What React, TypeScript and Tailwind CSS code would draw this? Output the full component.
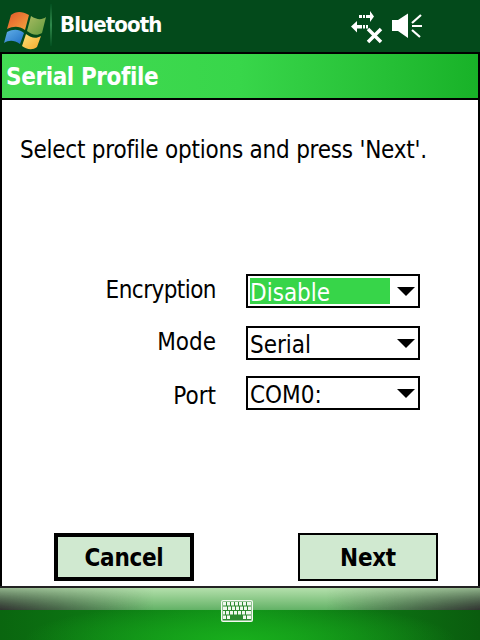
const fields = [
  { label: "Encryption", value: "Disable", selected: true, rowClass: "h-[34px]", labelClass: "-mt-[1px] tracking-[-0.55px]" },
  { label: "Mode", value: "Serial", selected: false, rowClass: "h-[34px] mt-[18px]", labelClass: "-mt-[1px]" },
  { label: "Port", value: "COM0:", selected: false, rowClass: "h-[34px] mt-[16px]", labelClass: "mt-[3px]" },
];

const WindowsLogo = () => (
  <svg width="44" height="46" viewBox="0 0 44 46" className="ml-[4px] mt-[6px] shrink-0">
    <defs>
      <linearGradient id="red" x1="0" y1="0" x2="1" y2="1">
        <stop offset="0" stopColor="#e0562a" />
        <stop offset="1" stopColor="#f5a63f" />
      </linearGradient>
      <linearGradient id="grn" x1="0" y1="0" x2="1" y2="1">
        <stop offset="0" stopColor="#a9bb62" />
        <stop offset="1" stopColor="#5f9a3c" />
      </linearGradient>
      <linearGradient id="blu" x1="0" y1="0" x2="1" y2="1">
        <stop offset="0" stopColor="#62b0e8" />
        <stop offset="1" stopColor="#1f6fc4" />
      </linearGradient>
      <linearGradient id="yel" x1="0" y1="0" x2="1" y2="1">
        <stop offset="0" stopColor="#fbe27a" />
        <stop offset="1" stopColor="#f4a92a" />
      </linearGradient>
    </defs>
    <path d="M7 9 C12 5 18 5 25 9 L21 24 C15 20 10 20 3 23 Z" fill="url(#red)" />
    <path d="M27 10 C33 14 38 14 42 11 L38 27 C33 30 28 29 23 25 Z" fill="url(#grn)" />
    <path d="M3 26 C9 23 15 23 20 27 L16 38 C10 34 5 34 0 37 Z" fill="url(#blu)" />
    <path d="M22 28 C27 32 32 33 37 30 L33 41 C28 45 22 43 18 40 Z" fill="url(#yel)" />
  </svg>
);

const TrayIcons = () => (
  <svg width="74" height="34" viewBox="0 0 74 34" fill="white">
    <path d="M9 5h3v3H9zM13 5h2v3h-2zM16 5h4V1l4 5.500-4 5.500V8h-4z" />
    <path d="M1 16.500l6-5.500v4h5v3.500H7v4zM13 15h2v3.500h-2zM16 15h2v3.500h-2z" />
    <path d="M18 19l6.500 6.500M31 19l-6.500 6.500M18 32l6.500-6.500M31 32l-6.500-6.500" stroke="white" strokeWidth="3.500" fill="none" />
    <path d="M42 10h6l10-6.500v24.500l-10-7h-6z" />
    <path d="M62 13l9-8M62 16h10M62 20l8 7" stroke="white" strokeWidth="2.200" fill="none" />
  </svg>
);

// keys as [x, width] per row
const keyRows = [
  [[2, 3], [6, 3], [10, 3], [14, 3], [18, 3], [22, 3], [26, 4]],
  [[2, 4], [7, 3], [11, 3], [15, 3], [19, 3], [23, 3], [27, 3]],
  [[2, 2], [5, 3], [9, 3], [13, 3], [17, 3], [21, 3], [25, 5]],
  [[2, 3], [6, 3], [22, 3], [26, 4]],
];

const KeyboardIcon = () => (
  <svg width="32" height="22" viewBox="0 0 32 22">
    <rect width="32" height="22" rx="2" fill="#f4faf2" />
    <rect x="1.500" y="1.500" width="29" height="19" fill="#2c8a30" />
    {keyRows.map((row, y) =>
      row.map(([x, w]) => <rect key={`${y}-${x}`} x={x} y={2 + y * 4.500} width={w} height="3.500" fill="#f0f8ee" />)
    )}
  </svg>
);

export default function App() {
  return (
    <div className="w-[480px] h-[640px] flex flex-col bg-black overflow-hidden font-['DejaVu_Sans',sans-serif] [font-stretch:condensed]">
      <div className="h-[52px] shrink-0 flex bg-[#034a1b]">
        <WindowsLogo />
        <div className="w-[2px] h-[42px] mt-[4px] ml-[2px] bg-gradient-to-b from-[#035020] via-[#2f8a4c] to-[#035020]" />
        <div className="ml-[8px] mt-[10px] text-[22px] leading-[30px] font-bold text-white tracking-[-0.9px]">Bluetooth</div>
        <div className="ml-auto mr-[56px] mt-[10px]">
          <TrayIcons />
        </div>
      </div>

      <div className="h-[2px] shrink-0 bg-black" />

      <div className="flex-1 flex flex-col mx-[2px] min-h-0">
        <div className="h-[44px] shrink-0 flex items-center px-[4px] pt-[2px] bg-gradient-to-r from-[#43db54] via-[#38d64a] to-[#18b228] text-[24px] font-bold text-white tracking-[-0.4px]">
          Serial Profile
        </div>
        <div className="h-[2px] shrink-0 bg-black" />

        <div className="flex-1 flex flex-col bg-white text-black">
          <div className="ml-[18px] mt-[33px] text-[24px] leading-[34px] whitespace-nowrap tracking-[-0.23px]">
            Select profile options and press 'Next'.
          </div>

          <div className="mt-[107px] ml-[244px] flex flex-col w-[174px]">
            {fields.map((f) => (
              <div key={f.label} className={`relative flex ${f.rowClass}`}>
                <div className={`absolute right-[204px] top-0 whitespace-nowrap text-[24px] leading-[34px] ${f.labelClass}`}>
                  {f.label}
                </div>
                <div className="w-full flex items-stretch border-2 border-black p-[2px]">
                  <div className={`w-[140px] flex items-center text-[24px] pt-[3px] ${f.selected ? "bg-[#37d549] text-white" : "text-black"}`}>
                    {f.value}
                  </div>
                  <div className="ml-auto mr-[1px] self-center mt-[1px] w-0 h-0 border-x-[9px] border-x-transparent border-t-[9px] border-t-black" />
                </div>
              </div>
            ))}
          </div>

          <div className="mt-auto mb-[5px] flex justify-between pl-[52px] pr-[40px]">
            <button className="w-[140px] h-[48px] border-4 border-black bg-[#d0e9d0] text-[24px] font-bold tracking-[-0.3px] pt-[1px]">Cancel</button>
            <button className="w-[140px] h-[48px] border-2 border-black bg-[#d0e9d0] text-[24px] font-bold tracking-[-0.3px] pt-[1px]">Next</button>
          </div>
        </div>
      </div>

      <div className="h-[2px] shrink-0 bg-[#222]" />

      <div className="relative h-[52px] shrink-0 flex flex-col">
        <div className="relative h-[22px] bg-gradient-to-b from-[#b4e0ac] to-[#62b266]">
          <div className="absolute inset-0 bg-[linear-gradient(to_right,#333,transparent_32%,transparent_68%,#333)] [mask-image:linear-gradient(to_bottom,rgba(0,0,0,0.25),black)]" />
        </div>
        <div className="flex-1 bg-[radial-gradient(ellipse_45%_130%_at_50%_100%,#18ae1c,transparent),linear-gradient(to_right,#0a660f,#109018,#0a5c0e)]" />
        <div className="absolute left-[221px] top-[12px]">
          <KeyboardIcon />
        </div>
      </div>
    </div>
  );
}
